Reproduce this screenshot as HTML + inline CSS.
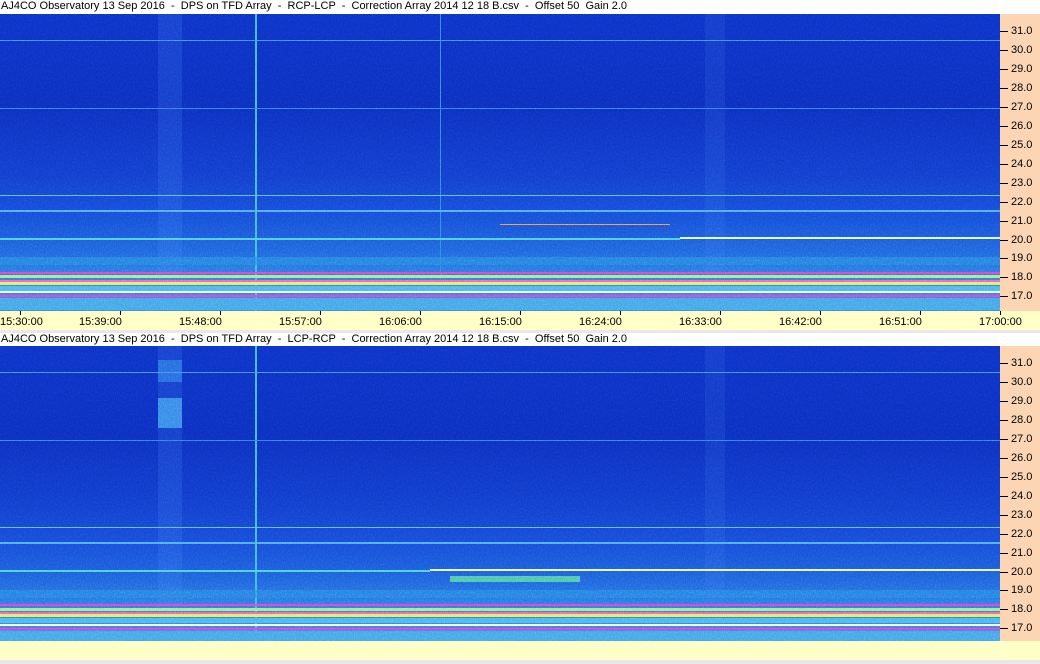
<!DOCTYPE html>
<html><head><meta charset="utf-8"><style>
*{margin:0;padding:0;box-sizing:border-box}
body{width:1040px;height:664px;background:#e8e8ec;position:relative;overflow:hidden;font-family:"Liberation Sans",sans-serif}
.t{position:absolute;left:0;width:1040px;height:14px;background:#fff;font-size:11px;line-height:13px;padding-left:1px;white-space:pre;color:#000}
.sp{position:absolute;left:0;width:1000px;overflow:hidden;
background:linear-gradient(180deg,#0e34c4 0%,#0d30bc 30%,#1440cc 55%,#1a52d8 70%,#2266dc 80%,#2c80e4 88%,#3890e0 100%)}
.ax{position:absolute;left:1000px;width:40px;background:#fcd6b4}
.ax div{position:absolute;left:0;font-size:11px;width:40px}
.ax div span{display:inline-block;width:8px;border-top:1px solid #000;vertical-align:middle;margin-right:3px}
.h{position:absolute;left:0;width:1000px}
.v{position:absolute;top:0;bottom:0}
.tm{position:absolute;top:311px;left:0;width:1040px;height:19px;background:#ffffc8;font-size:11px}
.tm div{position:absolute;top:5px}
.tm i{position:absolute;top:0;width:1px;height:4px;background:#000}
.nz{position:absolute;left:0;top:0;width:1000px;height:100%;opacity:.35;mix-blend-mode:overlay}
</style></head><body>
<svg width="0" height="0" style="position:absolute"><filter id="n"><feTurbulence type="fractalNoise" baseFrequency="0.9 0.5" numOctaves="1" seed="3"/><feColorMatrix values="0 0 0 0 0.5 0 0 0 0 0.6 0 0 0 0 1 3 0 0 0 -1.2"/></filter></svg>
<div class="t" style="top:0">AJ4CO Observatory 13 Sep 2016  -  DPS on TFD Array  -  RCP-LCP  -  Correction Array 2014 12 18 B.csv  -  Offset 50  Gain 2.0</div>
<div class="sp" style="top:14px;height:297px">
 <div class="v" style="left:158px;width:24px;background:rgba(80,140,255,.18)"></div>
 <div class="v" style="left:705px;width:20px;background:rgba(80,140,255,.12)"></div>
 <div class="v" style="left:255px;width:2px;background:#40c0e8"></div>
 <div class="v" style="left:440px;width:1px;background:#3090e0"></div>
 <div class="h" style="top:26px;height:1px;background:#4a90f0"></div>
 <div class="h" style="top:94px;height:1px;background:#3a80e8"></div>
 <div class="h" style="top:181px;height:1px;background:#60c0f0"></div>
 <div class="h" style="top:196px;height:2px;background:#50b0f0"></div>
 <div class="h" style="top:210px;height:1px;background:#f0a040;left:500px;width:170px"></div>
 <div class="h" style="top:223px;height:2px;background:#e8f8ff;left:680px;width:320px"></div>
 <div class="h" style="top:224px;height:2px;background:#50d0e0;width:680px"></div>
 <div class="h" style="top:243px;height:8px;background:#2c8ce0;opacity:.7"></div>
 <div class="h" style="top:258px;height:2px;background:#f040d0"></div>
 <div class="h" style="top:261px;height:3px;background:#a0f080"></div>
 <div class="h" style="top:266px;height:2px;background:#ff60c0"></div>
 <div class="h" style="top:268px;height:3px;background:#e0f060"></div>
 <div class="h" style="top:272px;height:5px;background:#50b8f0"></div>
 <div class="h" style="top:277px;height:2px;background:#f8f8ff"></div>
 <div class="h" style="top:281px;height:2px;background:#f040d0"></div>
 <div class="h" style="top:284px;height:12px;background:#48a8e8"></div>
 <svg class="nz"><rect width="100%" height="100%" filter="url(#n)"/></svg>
</div>
<div class="ax" style="top:14px;height:297px">
 <div style="top:11px"><span></span>31.0</div><div style="top:30px"><span></span>30.0</div><div style="top:49px"><span></span>29.0</div><div style="top:68px"><span></span>28.0</div><div style="top:87px"><span></span>27.0</div><div style="top:106px"><span></span>26.0</div><div style="top:125px"><span></span>25.0</div><div style="top:144px"><span></span>24.0</div><div style="top:163px"><span></span>23.0</div><div style="top:182px"><span></span>22.0</div><div style="top:201px"><span></span>21.0</div><div style="top:220px"><span></span>20.0</div><div style="top:238px"><span></span>19.0</div><div style="top:257px"><span></span>18.0</div><div style="top:276px"><span></span>17.0</div>
</div>
<div class="tm">
 <i style="left:20px"></i><i style="left:120px"></i><i style="left:220px"></i><i style="left:320px"></i><i style="left:420px"></i><i style="left:520px"></i><i style="left:620px"></i><i style="left:720px"></i><i style="left:820px"></i><i style="left:920px"></i><i style="left:1000px"></i>
 <div style="left:0">15:30:00</div><div style="left:79px">15:39:00</div><div style="left:179px">15:48:00</div><div style="left:279px">15:57:00</div><div style="left:379px">16:06:00</div><div style="left:479px">16:15:00</div><div style="left:579px">16:24:00</div><div style="left:679px">16:33:00</div><div style="left:779px">16:42:00</div><div style="left:879px">16:51:00</div><div style="left:979px">17:00:00</div>
</div>
<div class="t" style="top:333px">AJ4CO Observatory 13 Sep 2016  -  DPS on TFD Array  -  LCP-RCP  -  Correction Array 2014 12 18 B.csv  -  Offset 50  Gain 2.0</div>
<div class="sp" style="top:346px;height:295px">
 <div class="v" style="left:158px;width:24px;background:rgba(80,140,255,.18)"></div>
 <div class="h" style="left:158px;width:24px;top:52px;height:30px;background:#3c8ce8"></div>
 <div class="h" style="left:158px;width:24px;top:14px;height:22px;background:#2a6ee0"></div>
 <div class="v" style="left:705px;width:20px;background:rgba(80,140,255,.12)"></div>
 <div class="v" style="left:255px;width:2px;background:#40c0e8"></div>
 <div class="h" style="top:26px;height:1px;background:#4a90f0"></div>
 <div class="h" style="top:94px;height:1px;background:#3a80e8"></div>
 <div class="h" style="top:181px;height:1px;background:#60c0f0"></div>
 <div class="h" style="top:196px;height:2px;background:#50b0f0"></div>
 <div class="h" style="top:223px;height:2px;background:#e8f8ff;left:430px;width:570px"></div>
 <div class="h" style="top:224px;height:2px;background:#50d0e0;width:430px"></div>
 <div class="h" style="left:450px;width:130px;top:230px;height:6px;background:#60e0a0;opacity:.8"></div>
 <div class="h" style="top:244px;height:8px;background:#2c8ce0;opacity:.7"></div>
 <div class="h" style="top:258px;height:2px;background:#f040d0"></div>
 <div class="h" style="top:262px;height:3px;background:#a0f080"></div>
 <div class="h" style="top:266px;height:2px;background:#ff60c0"></div>
 <div class="h" style="top:268px;height:3px;background:#e0f060"></div>
 <div class="h" style="top:272px;height:5px;background:#50b8f0"></div>
 <div class="h" style="top:278px;height:2px;background:#f8f8ff"></div>
 <div class="h" style="top:282px;height:2px;background:#f040d0"></div>
 <div class="h" style="top:285px;height:10px;background:#48a8e8"></div>
 <svg class="nz"><rect width="100%" height="100%" filter="url(#n)"/></svg>
</div>
<div class="ax" style="top:346px;height:295px">
 <div style="top:11px"><span></span>31.0</div><div style="top:30px"><span></span>30.0</div><div style="top:49px"><span></span>29.0</div><div style="top:68px"><span></span>28.0</div><div style="top:87px"><span></span>27.0</div><div style="top:106px"><span></span>26.0</div><div style="top:125px"><span></span>25.0</div><div style="top:144px"><span></span>24.0</div><div style="top:163px"><span></span>23.0</div><div style="top:182px"><span></span>22.0</div><div style="top:201px"><span></span>21.0</div><div style="top:220px"><span></span>20.0</div><div style="top:238px"><span></span>19.0</div><div style="top:257px"><span></span>18.0</div><div style="top:276px"><span></span>17.0</div>
</div>
<div style="position:absolute;top:641px;left:0;width:1040px;height:19px;background:#ffffc8"></div>
</body></html>
